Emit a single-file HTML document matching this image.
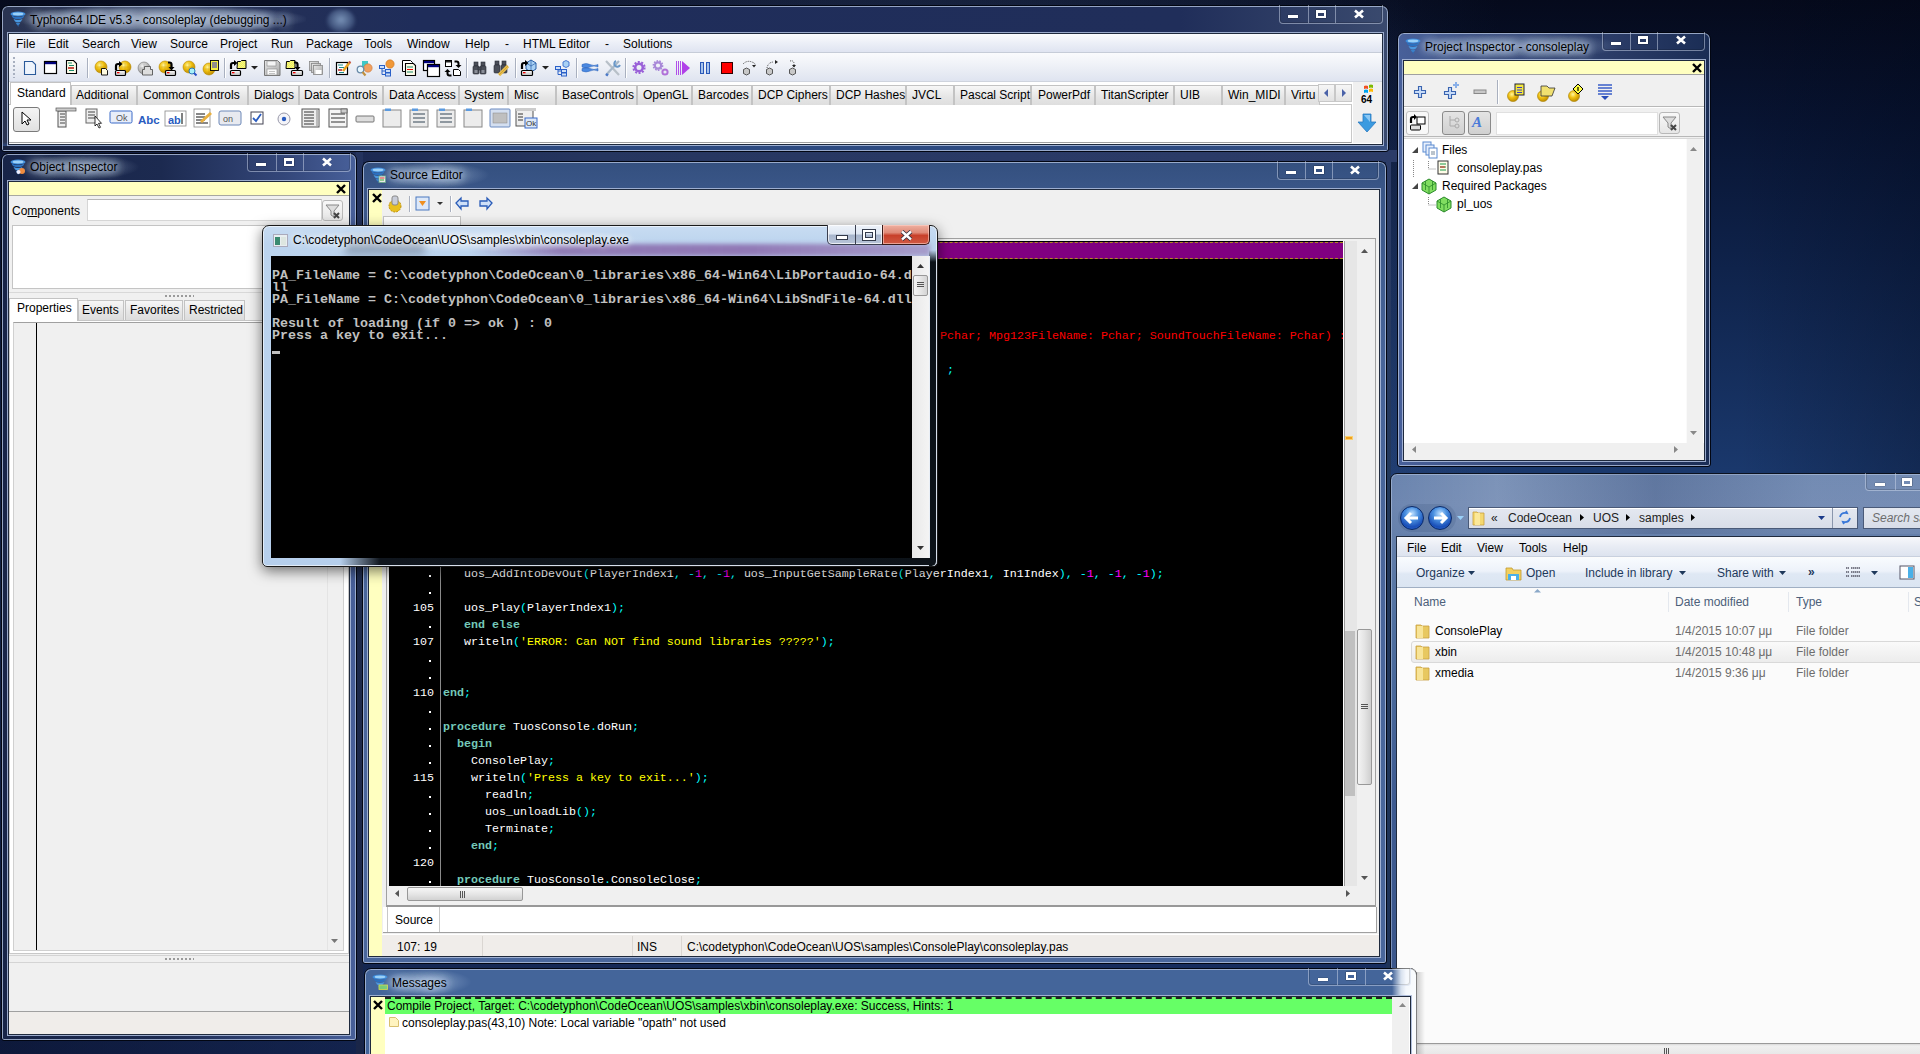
<!DOCTYPE html>
<html><head><meta charset="utf-8">
<style>
*{margin:0;padding:0;box-sizing:border-box}
html,body{width:1920px;height:1054px;overflow:hidden}
body{position:relative;font-family:"Liberation Sans",sans-serif;font-size:12px;color:#000;
background:linear-gradient(90deg,rgba(0,5,20,0) 1740px,rgba(0,5,20,.28) 1920px),radial-gradient(ellipse 650px 520px at 900px 330px,rgba(80,110,170,.5),rgba(80,110,170,0)),linear-gradient(90deg,rgba(8,12,32,.55) 0,rgba(20,30,60,.35) 400px,rgba(40,60,100,.1) 1390px,rgba(0,0,0,0) 1500px),linear-gradient(180deg,#050a1c 0,#081432 120px,#0e2148 250px,#1a386c 470px,#1c3c72 700px,#14285a 1054px);}
.a{position:absolute}
svg{position:absolute;overflow:visible}
.win{position:absolute;border-radius:7px 7px 3px 3px;border:1px solid #020612;
 background:linear-gradient(180deg,#42567a 0px,#2d3f60 30px,#263658 100%);
 box-shadow:inset 0 0 0 1px rgba(170,186,215,.85)}
.cap{position:absolute;margin-top:1px;font-size:12px;color:#000;white-space:nowrap;text-shadow:0 0 8px #d8e6f5,0 0 10px #d8e6f5,0 0 14px #cfe0f2}
.cb{position:absolute;border:1px solid rgba(205,215,235,.5);border-top:none;border-radius:0 0 4px 4px;box-shadow:inset 0 0 0 1px rgba(0,0,0,.15)}
.cb b{position:absolute;top:0;bottom:0;border-left:1px solid rgba(205,215,235,.5)}
.gl{position:absolute;background:#fff;box-shadow:0 0 1px #000}
.client{position:absolute;background:#f0f0f0;border:1px solid #1a2233}
.t{position:absolute;white-space:nowrap}
.mono{font-family:"Liberation Mono",monospace}
.tab{position:absolute;top:85px;height:20px;border:1px solid #c3c3c3;border-bottom:none;background:linear-gradient(180deg,#f7f7f7,#e5e5e5 60%,#dedede)}
</style></head><body>
<!-- MAIN -->
<div class="a" style="left:0;top:150px;width:1397px;height:12px;background:linear-gradient(90deg,#0e1838 0,#1a2750 300px,#26365f 600px,#2a3a66 1000px,#2c3c68 1397px)"></div>
<div class="a" style="left:1386px;top:152px;width:5px;height:902px;background:linear-gradient(180deg,#2c3c68,#22385a 40%,#1e3258)"></div>
<div class="a" style="left:356px;top:152px;width:7px;height:902px;background:linear-gradient(180deg,#24335e,#1e2a4a 50%,#1a2648)"></div>
<div class="win" style="left:1px;top:5px;width:1388px;height:147px;background:linear-gradient(180deg,rgba(0,0,0,0) 0,rgba(0,0,0,0) 136px,#2e4a80 140px),linear-gradient(90deg,#2a3452 0,#1f2d5a 30%,#202e5a 85%,#3a4a6e 100%)"></div>
<div class="a" style="left:16px;top:5px;width:290px;height:28px;border-radius:14px;background:radial-gradient(ellipse at center,rgba(210,225,245,.7),rgba(200,220,245,.35) 50%,rgba(200,220,245,0) 72%)"></div>
<div class="a" style="left:326px;top:9px;width:30px;height:24px;border-radius:14px 14px 4px 4px;background:radial-gradient(ellipse at 50% 45%,rgba(150,180,215,.75),rgba(120,150,190,.35) 55%,rgba(100,130,170,0) 75%);filter:blur(1.5px)"></div>
<svg style="left:10px;top:11px" width="16" height="16"><ellipse cx="8" cy="3" rx="7.5" ry="2.6" fill="#3a88d8"/><ellipse cx="8" cy="3" rx="5.5" ry="1.4" fill="#9ad0f8"/><path d="M1.5 4.5q6.5 3 13 0l-1.5 2.5q-5 2.5-10 0z" fill="#2a70c0"/><path d="M3.5 8q4.5 2 9 0l-1.5 2.5q-3 1.8-6 0z" fill="#4a98e0"/><path d="M5.5 11.5q3 1.2 5 0l-1.2 2q-1.5 1-2.6 0z" fill="#3a80c8"/><path d="M7 14q1 .8 2 0l-.8 1.8z" fill="#2a70c0"/></svg>
<div class="cap" style="left:30px;top:12px;line-height:14px">Typhon64 IDE v5.3 - consoleplay (debugging ...)</div>
<div class="cb" style="left:1279px;top:5px;width:104px;height:19px"><b style="left:28px"></b><b style="left:55px"></b></div>
<div class="gl" style="left:1288px;top:15px;width:10px;height:3px"></div>
<div class="a" style="left:1316px;top:10px;width:10px;height:8px;border:2px solid #fff;border-top-width:3px;box-shadow:0 0 1px #000"></div>
<svg style="left:1354px;top:10px" width="10" height="8"><path d="M1 0.5L9 7.5M9 0.5L1 7.5" stroke="#fff" stroke-width="2.6"/></svg>
<div class="a" style="left:3px;top:146px;width:1384px;height:4px;background:linear-gradient(90deg,#18223e 0,#1e2a50 12%,#2e4a80 30%,#2e4a80 85%,#3a5282 100%)"></div>
<div class="a" style="left:8px;top:33px;width:1375px;height:112px;background:#fff;border:1px solid #1f2a3d;box-shadow:0 0 0 1px rgba(168,184,216,.9)"></div>
<div class="a" style="left:9px;top:34px;width:1373px;height:19px;background:linear-gradient(180deg,#fbfcfe,#eceff7 50%,#dfe4f1);border-bottom:1px solid #c6ccd8"></div>
<div class="t" style="left:16px;top:37px;line-height:14px">File</div>
<div class="t" style="left:48px;top:37px;line-height:14px">Edit</div>
<div class="t" style="left:82px;top:37px;line-height:14px">Search</div>
<div class="t" style="left:131px;top:37px;line-height:14px">View</div>
<div class="t" style="left:170px;top:37px;line-height:14px">Source</div>
<div class="t" style="left:220px;top:37px;line-height:14px">Project</div>
<div class="t" style="left:271px;top:37px;line-height:14px">Run</div>
<div class="t" style="left:306px;top:37px;line-height:14px">Package</div>
<div class="t" style="left:364px;top:37px;line-height:14px">Tools</div>
<div class="t" style="left:407px;top:37px;line-height:14px">Window</div>
<div class="t" style="left:465px;top:37px;line-height:14px">Help</div>
<div class="t" style="left:505px;top:37px;line-height:14px">-</div>
<div class="t" style="left:523px;top:37px;line-height:14px">HTML Editor</div>
<div class="t" style="left:605px;top:37px;line-height:14px">-</div>
<div class="t" style="left:623px;top:37px;line-height:14px">Solutions</div>
<div class="a" style="left:9px;top:53px;width:1373px;height:29px;background:linear-gradient(180deg,#fafbfd,#f1f3f8 35%,#dfe4f0 100%);border-bottom:1px solid #cfd4de"></div>
<div class="a" style="left:13px;top:57px;width:2px;height:21px;background:repeating-linear-gradient(180deg,#a8b0c0 0 2px,transparent 2px 4px)"></div>
<svg style="left:0;top:0" width="1" height="1"><defs><radialGradient id="ggold" cx=".4" cy=".35" r=".7"><stop offset="0" stop-color="#fff6a0"/><stop offset=".45" stop-color="#f0c010"/><stop offset="1" stop-color="#b88600"/></radialGradient><radialGradient id="ggray" cx=".4" cy=".35" r=".7"><stop offset="0" stop-color="#f4f4f4"/><stop offset=".5" stop-color="#c0c0c0"/><stop offset="1" stop-color="#888"/></radialGradient><linearGradient id="gdev" x1="0" y1="0" x2="0" y2="1"><stop offset="0" stop-color="#fff"/><stop offset="1" stop-color="#b8b8b8"/></linearGradient><pattern id="gchk" width="2" height="2" patternUnits="userSpaceOnUse"><rect width="2" height="2" fill="#ffff40"/><rect width="1" height="1" fill="#e8e8a0"/><rect x="1" y="1" width="1" height="1" fill="#e8e8a0"/></pattern><linearGradient id="gdisk" x1="0" y1="0" x2="1" y2="1"><stop offset="0" stop-color="#e8e8e8"/><stop offset="1" stop-color="#a8a8a8"/></linearGradient></defs><path d="M24.5 61.5h8l3 3v10h-11z" fill="#eef4fc" stroke="#2a5a9a" stroke-width="1.1"/><rect x="44.5" y="61.5" width="12" height="12" fill="#fff" stroke="#000" stroke-width="1.2"/><rect x="45" y="62" width="11" height="2.2" fill="#00007a"/><path d="M66.5 60.5h7l3 3v10h-10z" fill="#fdfbe8" stroke="#000" stroke-width="1.1"/><path d="M68 63h4M69 65.5h5M68 68h6M69 70.5h5" stroke="#1a8a6a" stroke-width="1.2"/><path d="M68 68h6" stroke="#e00" stroke-width="1.2"/><circle cx="101" cy="67" r="6" fill="url(#ggold)" stroke="#b88a00" stroke-width=".6"/><path d="M97 67h8M101 63v8" stroke="#b88a00" stroke-width=".5" opacity=".6"/><path d="M101.5 68.5h4l2 2v4.5h-6z" fill="#fffbe0" stroke="#000" stroke-width=".9"/><circle cx="125" cy="67" r="6" fill="url(#ggold)" stroke="#b88a00" stroke-width=".6"/><path d="M121 67h8M125 63v8" stroke="#b88a00" stroke-width=".5" opacity=".6"/><path d="M116 70v-4q0-2 2-2h1.5" stroke="#000" stroke-width="2.2" fill="none"/><path d="M119 61l3.5 3-3.5 3z" fill="#000"/><rect x="115.5" y="70.5" width="10" height="5" rx="1" fill="url(#gdev)" stroke="#000" stroke-width="1.2"/><rect x="117" y="72" width="2.5" height="1.3" fill="#e00"/><circle cx="144" cy="68" r="6" fill="url(#ggray)" stroke="#777" stroke-width=".6"/><path d="M140 68h8M144 64v8" stroke="#777" stroke-width=".5" opacity=".6"/><path d="M144.5 66.5h6v3h2v5.5h-10v-5.5h2z" fill="#ddd" stroke="#555" stroke-width=".9"/><circle cx="165" cy="67" r="6" fill="url(#ggold)" stroke="#b88a00" stroke-width=".6"/><path d="M161 67h8M165 63v8" stroke="#b88a00" stroke-width=".5" opacity=".6"/><path d="M168 62.5h1.5q2 0 2 2v3" stroke="#000" stroke-width="2.2" fill="none"/><path d="M168.5 67h6l-3 3.5z" fill="#000"/><rect x="165.5" y="70.5" width="10" height="5" rx="1" fill="url(#gdev)" stroke="#000" stroke-width="1.2"/><rect x="167" y="72" width="2.5" height="1.3" fill="#e00"/><circle cx="189" cy="67" r="6" fill="url(#ggold)" stroke="#b88a00" stroke-width=".6"/><path d="M185 67h8M189 63v8" stroke="#b88a00" stroke-width=".5" opacity=".6"/><circle cx="192" cy="71" r="3" fill="#a8f0f8" stroke="#2a7ab8" stroke-width="1"/><path d="M194 73l2.5 2.5" stroke="#2a50c8" stroke-width="2"/><circle cx="209" cy="69" r="6" fill="url(#ggold)" stroke="#b88a00" stroke-width=".6"/><path d="M205 69h8M209 65v8" stroke="#b88a00" stroke-width=".5" opacity=".6"/><rect x="210.5" y="60.5" width="8" height="10" fill="#f8f040" stroke="#000" stroke-width=".9"/><path d="M212 63h5M212 65h5M212 67h5" stroke="#2a2ad8" stroke-width="1"/><path d="M231 69v-4q0-2 2-2h1.5" stroke="#000" stroke-width="2.2" fill="none"/><path d="M234 60l3.5 3-3.5 3z" fill="#000"/><path d="M237.5 61.5h3l1-1h4.5v8h-9z" fill="url(#gchk)" stroke="#000" stroke-width="1"/><rect x="230.5" y="70.5" width="10" height="5" rx="1" fill="url(#gdev)" stroke="#000" stroke-width="1.2"/><rect x="232" y="72" width="2.5" height="1.3" fill="#e00"/><path d="M251 66h7l-3.5 3.5z" fill="#222"/><path d="M264.5 60.5h13l2.5 2.5v12.5h-15.5z" fill="url(#gdisk)" stroke="#777" stroke-width="1"/><rect x="267" y="61" width="9" height="5" fill="#f4f4f4" stroke="#888" stroke-width=".6"/><rect x="267" y="69" width="10" height="6" fill="#fafafa" stroke="#888" stroke-width=".6"/><path d="M269 71.5h6M269 73.5h6" stroke="#aaa" stroke-width=".7"/><path d="M286.5 61.5h3l1-1h4.5v8h-9z" fill="url(#gchk)" stroke="#000" stroke-width="1"/><path d="M294 62.5h1.5q2 0 2 2v3" stroke="#000" stroke-width="2.2" fill="none"/><path d="M294.5 67h6l-3 3.5z" fill="#000"/><rect x="291.5" y="70.5" width="11" height="5" rx="1" fill="url(#gdev)" stroke="#000" stroke-width="1.2"/><rect x="293" y="72" width="2.5" height="1.3" fill="#e00"/><g stroke="#888" stroke-width=".8" fill="url(#gdisk)"><rect x="309.5" y="61.5" width="9" height="9"/><rect x="311.5" y="63.5" width="9" height="9"/><rect x="313.5" y="65.5" width="9" height="9"/></g><rect x="315.5" y="70" width="6" height="4" fill="#fff"/><rect x="336.5" y="62.5" width="11" height="12" fill="#fff" stroke="#000" stroke-width="1.2"/><path d="M338 65h5M339 67.5h5M338 70h4M339 72.5h5" stroke="#1a8a8a" stroke-width="1.1"/><path d="M338 70h4" stroke="#e00" stroke-width="1.1"/><path d="M343 71l7-9" stroke="#e8a020" stroke-width="2.6"/><path d="M349 61.5l1.5 1.5" stroke="#c05050" stroke-width="2"/><rect x="362" y="61" width="6" height="6" fill="#40c8c8"/><circle cx="368" cy="68" r="4.2" fill="#f0a060" stroke="#c87030" stroke-width=".5"/><circle cx="360.5" cy="69.5" r="3.3" fill="#e8f8ff" stroke="#6a8aa8" stroke-width="1.3"/><path d="M362.5 72l3 3.5" stroke="#c09040" stroke-width="2.2"/><circle cx="390" cy="64" r="4.2" fill="#f09838" stroke="#c86a10" stroke-width=".5"/><g fill="#cfe0f8" stroke="#2a60c8" stroke-width="1"><rect x="379.5" y="65.5" width="5" height="3"/><rect x="385.5" y="69.5" width="5" height="3"/><rect x="385.5" y="73" width="5" height="3"/></g><path d="M382 68.5v6h3.5M382 71h3.5" stroke="#2a60c8" fill="none"/><path d="M402.5 60.5h8l2 2v9h-10z" fill="#fff" stroke="#000" stroke-width="1"/><path d="M405.5 63.5h8l2 2v10h-10z" fill="#fdfbe8" stroke="#000" stroke-width="1.1"/><path d="M407 67h6M407 69.5h6M407 72h6" stroke="#1a8a6a" stroke-width="1.1"/><path d="M407 69.5h6" stroke="#e00"/><rect x="423.5" y="60.5" width="11" height="10" fill="#fff" stroke="#000" stroke-width="1.2"/><rect x="424" y="61" width="10" height="2.2" fill="#00007a"/><rect x="427.5" y="64.5" width="12" height="12" fill="#fff" stroke="#000" stroke-width="1.2"/><rect x="428" y="65" width="11" height="2.2" fill="#00007a"/><rect x="445.5" y="60.5" width="6" height="6" fill="#fff" stroke="#000"/><rect x="446" y="61" width="5" height="1.5" fill="#222"/><path d="M454.5 61.5h2q2 0 2 2v2" stroke="#000" stroke-width="2" fill="none"/><path d="M455.5 65h6l-3 3z" fill="#000"/><path d="M451.5 75.5h-2q-2 0-2-2v-2" stroke="#000" stroke-width="2" fill="none"/><path d="M444.5 72h6l-3-3z" fill="#000"/><path d="M453.5 69.5h5l2 2v4h-7z" fill="#fff" stroke="#000"/><g fill="#4a4e58" stroke="#2a2e38" stroke-width=".6"><rect x="474" y="62" width="4" height="4"/><rect x="481" y="62" width="4" height="4"/><rect x="473" y="66" width="6" height="8" rx="1"/><rect x="480" y="66" width="6" height="8" rx="1"/><rect x="478" y="67" width="3" height="3"/></g><rect x="474.5" y="70" width="3" height="3" fill="#8a8e98"/><rect x="481.5" y="70" width="3" height="3" fill="#8a8e98"/><g fill="#4a4e58" stroke="#2a2e38" stroke-width=".6"><rect x="495" y="61" width="4" height="4"/><rect x="502" y="61" width="4" height="4"/><rect x="494" y="65" width="6" height="8" rx="1"/><rect x="501" y="65" width="6" height="8" rx="1"/></g><path d="M499 75l9-9" stroke="#e8c050" stroke-width="3.2"/><path d="M499 75l9-9" stroke="#c89020" stroke-width="1" opacity=".6"/><path d="M526 63l5-3 5 3v6l-5 3-5-3z" fill="#a8d0f4" stroke="#2a60a8" stroke-width="1"/><path d="M531 60v12M526 63l5 3 5-3" stroke="#2a60a8" fill="none" stroke-width=".7"/><path d="M522 69v-4q0-2 2-2h1.5" stroke="#000" stroke-width="2.2" fill="none"/><path d="M525 60l3.5 3-3.5 3z" fill="#000"/><rect x="521.5" y="70.5" width="11" height="5" rx="1" fill="url(#gdev)" stroke="#000" stroke-width="1.2"/><rect x="523" y="72" width="2.5" height="1.3" fill="#e00"/><path d="M542 66h7l-3.5 3.5z" fill="#222"/><path d="M563 62l3-1.5 3 1.5v4l-3 1.5-3-1.5z" fill="#a8d0f4" stroke="#2a60c8" stroke-width=".8"/><g fill="#cfe0f8" stroke="#2a60c8" stroke-width="1"><rect x="555.5" y="66.5" width="5" height="3"/><rect x="561.5" y="69.5" width="5" height="3"/><rect x="561.5" y="73" width="5" height="3"/></g><path d="M558 69.5v5h3.5M558 71h3.5" stroke="#2a60c8" fill="none"/><path d="M582 64.5q4-2 8 0t8 0v2.5q-4-2-8 0t-8 0zM582 68.5q4-2 8 0t8 0v2.5q-4-2-8 0t-8 0z" fill="#4a88e0" stroke="#2a60b8" stroke-width=".5"/><path d="M606 61l13 14" stroke="#b8c0c8" stroke-width="2.2"/><path d="M619 61l-13 14" stroke="#a8b8c8" stroke-width="2.2"/><path d="M616 61a3 3 0 1 0 4 4" stroke="#6a98c8" stroke-width="2" fill="none"/><path d="M606 74l2 1.5" stroke="#4a78c8" stroke-width="2.5"/><circle cx="639" cy="67.5" r="5.6" fill="none" stroke="#9a60d8" stroke-width="2" stroke-dasharray="2 1.5"/><circle cx="639" cy="67.5" r="3.8" fill="none" stroke="#9a60d8" stroke-width="2.6"/><circle cx="658" cy="65.5" r="4.6" fill="none" stroke="#a888d8" stroke-width="1.6" stroke-dasharray="1.6 1.2"/><circle cx="658" cy="65.5" r="3.2" fill="none" stroke="#a888d8" stroke-width="2.2"/><circle cx="665" cy="72" r="2.6" fill="none" stroke="#b070d8" stroke-width="2"/><path d="M676.5 61v14M678.5 61v14M680.5 61v14" stroke="#b050e8" stroke-width="1"/><path d="M682 61l8 7-8 7z" fill="#b040e8"/><rect x="700.5" y="62.5" width="3" height="11" fill="#a8c4ec" stroke="#2a58b8"/><rect x="706.5" y="62.5" width="3" height="11" fill="#a8c4ec" stroke="#2a58b8"/><rect x="721.5" y="62.5" width="11" height="11" fill="#f00" stroke="#300" stroke-width="1"/><path d="M743.5 69.5l3-1.5 3 1.5v4l-3 1.5-3-1.5z" fill="#c8c8c8" stroke="#333" stroke-width=".8"/><path d="M766.5 69.5l3-1.5 3 1.5v4l-3 1.5-3-1.5z" fill="#c8c8c8" stroke="#333" stroke-width=".8"/><path d="M789.5 69.5l3-1.5 3 1.5v4l-3 1.5-3-1.5z" fill="#c8c8c8" stroke="#333" stroke-width=".8"/><path d="M743 64q4-4 9-2t2 4" stroke="#444" stroke-width="1" stroke-dasharray="1 1" fill="none"/><path d="M752 65h4l-2 2.5z" fill="#222"/><path d="M767 68q1-6 7-6" stroke="#444" stroke-width="1" stroke-dasharray="1 1" fill="none"/><path d="M775 60l3 2-3 2z" fill="#222"/><path d="M790 61q4-1 4 3v3" stroke="#444" stroke-width="1" stroke-dasharray="1 1" fill="none"/><path d="M792 65h4l-2 2.5z" fill="#222"/></svg>
<div class="a" style="left:87px;top:58px;width:1px;height:20px;background:#a9b0bf;box-shadow:1px 0 0 #fff"></div>
<div class="a" style="left:224px;top:58px;width:1px;height:20px;background:#a9b0bf;box-shadow:1px 0 0 #fff"></div>
<div class="a" style="left:329px;top:58px;width:1px;height:20px;background:#a9b0bf;box-shadow:1px 0 0 #fff"></div>
<div class="a" style="left:466px;top:58px;width:1px;height:20px;background:#a9b0bf;box-shadow:1px 0 0 #fff"></div>
<div class="a" style="left:515px;top:58px;width:1px;height:20px;background:#a9b0bf;box-shadow:1px 0 0 #fff"></div>
<div class="a" style="left:576px;top:58px;width:1px;height:20px;background:#a9b0bf;box-shadow:1px 0 0 #fff"></div>
<div class="a" style="left:625px;top:58px;width:1px;height:20px;background:#a9b0bf;box-shadow:1px 0 0 #fff"></div>
<div class="a" style="left:9px;top:104px;width:1343px;height:39px;background:#fff;border:1px solid #c9c9c9;border-left:none;border-bottom:1px solid #a0a0a0"></div>
<div class="a" style="left:10px;top:82px;width:61px;height:23px;background:#fff;border:1px solid #c3c3c3;border-bottom:none"></div>
<div class="t" style="left:17px;top:86px;line-height:14px">Standard</div>
<div class="tab" style="left:71px;width:66px"></div>
<div class="t" style="left:76px;top:88px;line-height:14px;">Additional</div>
<div class="tab" style="left:137px;width:111px"></div>
<div class="t" style="left:143px;top:88px;line-height:14px;">Common Controls</div>
<div class="tab" style="left:248px;width:51px"></div>
<div class="t" style="left:254px;top:88px;line-height:14px;">Dialogs</div>
<div class="tab" style="left:299px;width:84px"></div>
<div class="t" style="left:304px;top:88px;line-height:14px;">Data Controls</div>
<div class="tab" style="left:383px;width:76px"></div>
<div class="t" style="left:389px;top:88px;line-height:14px;">Data Access</div>
<div class="tab" style="left:459px;width:49px"></div>
<div class="t" style="left:464px;top:88px;line-height:14px;">System</div>
<div class="tab" style="left:508px;width:48px"></div>
<div class="t" style="left:514px;top:88px;line-height:14px;">Misc</div>
<div class="tab" style="left:556px;width:81px"></div>
<div class="t" style="left:562px;top:88px;line-height:14px;">BaseControls</div>
<div class="tab" style="left:637px;width:55px"></div>
<div class="t" style="left:643px;top:88px;line-height:14px;">OpenGL</div>
<div class="tab" style="left:692px;width:60px"></div>
<div class="t" style="left:698px;top:88px;line-height:14px;">Barcodes</div>
<div class="tab" style="left:752px;width:78px"></div>
<div class="t" style="left:758px;top:88px;line-height:14px;">DCP Ciphers</div>
<div class="tab" style="left:830px;width:76px"></div>
<div class="t" style="left:836px;top:88px;line-height:14px;">DCP Hashes</div>
<div class="tab" style="left:906px;width:48px"></div>
<div class="t" style="left:912px;top:88px;line-height:14px;">JVCL</div>
<div class="tab" style="left:954px;width:77px"></div>
<div class="t" style="left:960px;top:88px;line-height:14px;">Pascal Script</div>
<div class="tab" style="left:1031px;width:64px"></div>
<div class="t" style="left:1038px;top:88px;line-height:14px;">PowerPdf</div>
<div class="tab" style="left:1095px;width:79px"></div>
<div class="t" style="left:1101px;top:88px;line-height:14px;">TitanScripter</div>
<div class="tab" style="left:1174px;width:48px"></div>
<div class="t" style="left:1180px;top:88px;line-height:14px;">UIB</div>
<div class="tab" style="left:1222px;width:63px"></div>
<div class="t" style="left:1228px;top:88px;line-height:14px;">Win_MIDI</div>
<div class="tab" style="left:1285px;width:35px"></div>
<div class="t" style="left:1291px;top:88px;line-height:14px;overflow:hidden;width:27px">Virtu</div>
<div class="a" style="left:1318px;top:84px;width:17px;height:18px;border:1px solid #c8c8c8;background:linear-gradient(#f6f6f6,#e2e2e2)"></div>
<div class="a" style="left:1335px;top:84px;width:17px;height:18px;border:1px solid #c8c8c8;background:linear-gradient(#f6f6f6,#e2e2e2)"></div>
<svg style="left:1324px;top:89px" width="6" height="8"><path d="M4 0L0 4L4 8z" fill="#4a62a8"/></svg>
<svg style="left:1342px;top:89px" width="6" height="8"><path d="M0 0L4 4L0 8z" fill="#4a62a8"/></svg>
<div class="a" style="left:1353px;top:82px;width:29px;height:61px;background:#f0f0f0"></div>
<svg style="left:1363px;top:84px" width="12" height="10"><path d="M1 2q2-1 4 0v3q-2-1-4 0z" fill="#f25022"/><path d="M6 1q2-1 4 0v3q-2-1-4 0z" fill="#7fba00"/><path d="M1 6q2-1 4 0v3q-2-1-4 0z" fill="#00a4ef"/><path d="M6 5q2-1 4 0v3q-2-1-4 0z" fill="#ffb900"/></svg>
<div class="t" style="left:1361px;top:94px;font-size:10px;font-weight:bold;line-height:11px">64</div>
<svg style="left:1357px;top:113px" width="20" height="20"><path d="M6 1h8v8h5l-9 10l-9-10h5z" fill="#3c9be0" stroke="#2a78c0" stroke-width=".8"/><path d="M7 2h6v7" fill="#8cc8f4"/></svg>
<div class="a" style="left:13px;top:107px;width:27px;height:25px;border:1px solid #7a7a7a;border-radius:3px;background:linear-gradient(#f4f4f4,#e0e0e0)"></div>
<svg style="left:21px;top:112px" width="12" height="14"><path d="M1 0v12l3-3 2 4 2-1-2-4h4z" fill="#fff" stroke="#000"/></svg>
<svg style="left:0;top:0" width="1" height="1"><rect x="58" y="111" width="8" height="16" fill="#eee" stroke="#555"/><rect x="56" y="108" width="20" height="3" fill="#ccc" stroke="#555" stroke-width=".7"/><path d="M60 114h5M60 117h5M60 120h5M60 123h5" stroke="#444"/><rect x="86" y="109" width="11" height="14" fill="#eee" stroke="#666"/><path d="M88 112h7M88 115h7M88 118h7" stroke="#444"/><path d="M95 116v10l2-2 2 4 1.5-.7-2-4h3z" fill="#fff" stroke="#000" stroke-width=".8"/><rect x="110" y="111" width="22" height="12" rx="1.5" fill="#e8eefa" stroke="#3a6ac8"/><text x="116" y="121" font-size="9" fill="#555" font-family="Liberation Sans">Ok</text><text x="138" y="124" font-size="11.5" font-weight="bold" fill="#2a5cc0" font-family="Liberation Sans">Abc</text><rect x="165" y="111" width="21" height="15" fill="#fff" stroke="#888" stroke-width=".8"/><text x="168" y="124" font-size="11" font-weight="bold" fill="#2a5cc0" font-family="Liberation Sans">ab</text><path d="M182 113v11" stroke="#000"/><rect x="194" y="109" width="16" height="18" fill="#fff" stroke="#888" stroke-width=".8"/><path d="M196 114h9M196 117h9M196 120h9M196 123h12" stroke="#111" stroke-width="1.2"/><path d="M201 122l10-9" stroke="#e8b040" stroke-width="3"/><rect x="219" y="111" width="22" height="14" rx="2" fill="#e8eaf0" stroke="#6d88b8"/><text x="223" y="122" font-size="9" fill="#555" font-family="Liberation Sans">on</text><rect x="251" y="112" width="12" height="12" fill="#fff" stroke="#445"/><path d="M253 118l3 3 5-7" stroke="#2a5cc0" stroke-width="1.8" fill="none"/><circle cx="284" cy="119" r="6" fill="#f4f4f8" stroke="#99a"/><circle cx="284" cy="119" r="2.2" fill="#2a5cc0"/><rect x="302" y="109" width="17" height="18" fill="#eee" stroke="#555"/><path d="M304 112h10M304 115h10M304 118h10M304 121h10M304 124h10" stroke="#333"/><rect x="316" y="110" width="2.5" height="16" fill="#bbb"/><rect x="329" y="109" width="18" height="18" fill="#f4f4f4" stroke="#555"/><path d="M331 114h14M331 118h14M331 122h14" stroke="#333"/><rect x="341" y="109" width="6" height="4" fill="#ccc" stroke="#555" stroke-width=".7"/><rect x="356" y="116" width="18" height="6" rx="1" fill="#ddd" stroke="#777"/><rect x="383" y="110" width="18" height="17" fill="#ececec" stroke="#888"/><rect x="385" y="108.5" width="6" height="2.5" fill="#5a9ae0"/><rect x="410" y="110" width="18" height="17" fill="#ececec" stroke="#888"/><rect x="412" y="108.5" width="6" height="2.5" fill="#5a9ae0"/><rect x="437" y="110" width="18" height="17" fill="#ececec" stroke="#888"/><rect x="439" y="108.5" width="6" height="2.5" fill="#5a9ae0"/><rect x="464" y="110" width="18" height="17" fill="#ececec" stroke="#888"/><rect x="466" y="108.5" width="6" height="2.5" fill="#5a9ae0"/><path d="M413 114h12M413 118h12M413 122h12" stroke="#345"/><path d="M440 114h12M440 118h12M440 122h12" stroke="#345"/><rect x="490" y="109" width="20" height="18" rx="1" fill="#d4dff0" stroke="#6a8ac0"/><rect x="493" y="113" width="14" height="10" fill="#bfbfbf" stroke="#888" stroke-width=".5"/><rect x="516" y="109" width="17" height="17" fill="#eee" stroke="#555"/><rect x="516" y="108" width="20" height="3" fill="#ccc"/><path d="M518 114h5M518 117h5M518 120h5" stroke="#333"/><rect x="525" y="118" width="12" height="10" fill="#dce8f8" stroke="#3a6ac8"/><text x="526" y="126" font-size="8" fill="#333" font-family="Liberation Sans">Ok</text></svg>
<!-- OI -->
<div class="win" style="left:1px;top:153px;width:356px;height:888px;background:linear-gradient(90deg,#172448 0,#1c2a50 45%,#34477a 80%,#48609a 100%)"></div>
<div class="a" style="left:20px;top:154px;width:120px;height:26px;border-radius:13px;background:radial-gradient(ellipse at center,rgba(200,220,245,.5),rgba(200,220,245,0) 70%)"></div>
<svg style="left:10px;top:159px" width="16" height="16"><ellipse cx="8" cy="3" rx="7.5" ry="2.6" fill="#3a88d8"/><ellipse cx="8" cy="3" rx="5.5" ry="1.4" fill="#9ad0f8"/><path d="M1.5 4.5q6.5 3 13 0l-1.5 2.5q-5 2.5-10 0z" fill="#2a70c0"/><path d="M3.5 8q4.5 2 9 0l-1.5 2.5q-3 1.8-6 0z" fill="#4a98e0"/><path d="M5.5 11.5q3 1.2 5 0l-1.2 2q-1.5 1-2.6 0z" fill="#3a80c8"/><path d="M7 14q1 .8 2 0l-.8 1.8z" fill="#2a70c0"/><circle cx="12" cy="12" r="3" fill="#f08a3a"/><circle cx="8.5" cy="13" r="2" fill="#eef"/></svg>
<div class="cap" style="left:30px;top:159px;line-height:14px">Object Inspector</div>
<div class="cb" style="left:247px;top:153px;width:104px;height:19px"><b style="left:28px"></b><b style="left:55px"></b></div>
<div class="gl" style="left:256px;top:163px;width:10px;height:3px"></div>
<div class="a" style="left:284px;top:158px;width:10px;height:8px;border:2px solid #fff;border-top-width:3px;box-shadow:0 0 1px #000"></div>
<svg style="left:322px;top:158px" width="10" height="8"><path d="M1 0.5L9 7.5M9 0.5L1 7.5" stroke="#fff" stroke-width="2.6"/></svg>
<div class="a" style="left:8px;top:181px;width:342px;height:854px;background:#f0f0f0;border:1px solid #1f2a3d;box-shadow:0 0 0 1px rgba(168,184,216,.9)"></div>
<div class="a" style="left:9px;top:182px;width:340px;height:14px;background:#ffffc0;border-bottom:1px solid #a8a8a0"></div>
<svg style="left:336px;top:184px" width="10" height="10"><path d="M1 1L9 9M9 1L1 9" stroke="#000" stroke-width="2.4"/></svg>
<div class="t" style="left:12px;top:204px;line-height:14px">Co<u>m</u>ponents</div>
<div class="a" style="left:87px;top:199px;width:235px;height:22px;background:#fff;border:1px solid #d6d6d6;border-top-color:#b6b6b6"></div>
<div class="a" style="left:322px;top:200px;width:21px;height:21px;border:1px solid #b8b8b8;border-radius:3px;background:linear-gradient(#f8f8f8,#e6e6e6)"></div>
<svg style="left:325px;top:204px" width="16" height="15"><path d="M1 1h13l-5 6v6l-3-2V7z" fill="#ddd" stroke="#888"/><path d="M9 9l5 5M14 9l-5 5" stroke="#444" stroke-width="2"/></svg>
<div class="a" style="left:12px;top:225px;width:334px;height:64px;background:#fff;border:1px solid #c4c4c4"></div>
<div class="a" style="left:9px;top:292px;width:340px;height:1px;background:#d8d8d8"></div>
<div class="a" style="left:165px;top:295px;width:29px;height:2px;background:repeating-linear-gradient(90deg,#9a9a9a 0 2px,transparent 2px 4px)"></div>
<div class="a" style="left:9px;top:320px;width:340px;height:1px;background:#c6c6c6"></div>
<div class="a" style="left:9px;top:298px;width:69px;height:23px;background:#fff;border:1px solid #c3c3c3;border-bottom:none"></div>
<div class="t" style="left:17px;top:301px;line-height:14px">Properties</div>
<div class="a" style="left:78px;top:300px;width:46px;height:20px;border:1px solid #c3c3c3;border-bottom:none;background:linear-gradient(180deg,#f7f7f7,#e5e5e5 60%,#dcdcdc)"></div>
<div class="t" style="left:82px;top:303px;line-height:14px">Events</div>
<div class="a" style="left:125px;top:300px;width:58px;height:20px;border:1px solid #c3c3c3;border-bottom:none;background:linear-gradient(180deg,#f7f7f7,#e5e5e5 60%,#dcdcdc)"></div>
<div class="t" style="left:130px;top:303px;line-height:14px">Favorites</div>
<div class="a" style="left:184px;top:300px;width:61px;height:20px;border:1px solid #c3c3c3;border-bottom:none;background:linear-gradient(180deg,#f7f7f7,#e5e5e5 60%,#dcdcdc)"></div>
<div class="t" style="left:189px;top:303px;line-height:14px">Restricted</div>
<div class="a" style="left:9px;top:321px;width:340px;height:633px;background:#fff;border-left:1px solid #c8c8c8;border-right:1px solid #c8c8c8;border-bottom:1px solid #c8c8c8"></div>
<div class="a" style="left:13px;top:322px;width:331px;height:629px;background:#f0f0f0;border:1px solid #d0d0d0;border-top-color:#a0a0a0"></div>
<div class="a" style="left:36px;top:323px;width:1px;height:627px;background:#000"></div>
<div class="a" style="left:327px;top:323px;width:16px;height:627px;background:#f0f0f0;border-left:1px solid #e4e4e4"></div>
<svg style="left:331px;top:939px" width="8" height="5"><path d="M0 0h7l-3.5 4z" fill="#777"/></svg>
<div class="a" style="left:9px;top:955px;width:340px;height:1px;background:#d4d4d4"></div>
<div class="a" style="left:165px;top:958px;width:29px;height:2px;background:repeating-linear-gradient(90deg,#9a9a9a 0 2px,transparent 2px 4px)"></div>
<div class="a" style="left:9px;top:962px;width:340px;height:1px;background:#d4d4d4"></div>
<div class="a" style="left:9px;top:1011px;width:340px;height:1px;background:#a0a0a0"></div>
<div class="a" style="left:9px;top:1012px;width:340px;height:22px;background:#f0edea"></div>
<!-- SOURCE EDITOR -->
<div class="win" style="left:362px;top:161px;width:1025px;height:803px;background:linear-gradient(180deg,#34507f 0,#3a5688 28px,#48659a 200px,#4a679c 100%)"></div>
<div class="a" style="left:380px;top:162px;width:110px;height:26px;border-radius:13px;background:radial-gradient(ellipse at center,rgba(200,220,245,.5),rgba(200,220,245,0) 70%)"></div>
<svg style="left:370px;top:167px" width="16" height="16"><ellipse cx="8" cy="3" rx="7.5" ry="2.6" fill="#3a88d8"/><ellipse cx="8" cy="3" rx="5.5" ry="1.4" fill="#9ad0f8"/><path d="M1.5 4.5q6.5 3 13 0l-1.5 2.5q-5 2.5-10 0z" fill="#2a70c0"/><path d="M3.5 8q4.5 2 9 0l-1.5 2.5q-3 1.8-6 0z" fill="#4a98e0"/><path d="M5.5 11.5q3 1.2 5 0l-1.2 2q-1.5 1-2.6 0z" fill="#3a80c8"/><path d="M7 14q1 .8 2 0l-.8 1.8z" fill="#2a70c0"/><rect x="9" y="9" width="6.5" height="6.5" fill="#e8e8e8" stroke="#6a8" stroke-width=".8"/><path d="M10 11h4.5" stroke="#d33"/><path d="M10 13h4" stroke="#3a3"/></svg>
<div class="cap" style="left:390px;top:167px;line-height:14px">Source Editor</div>
<div class="cb" style="left:1277px;top:161px;width:102px;height:19px"><b style="left:27px"></b><b style="left:54px"></b></div>
<div class="gl" style="left:1286px;top:171px;width:10px;height:3px"></div>
<div class="a" style="left:1314px;top:166px;width:10px;height:8px;border:2px solid #fff;border-top-width:3px;box-shadow:0 0 1px #000"></div>
<svg style="left:1350px;top:166px" width="10" height="8"><path d="M1 0.5L9 7.5M9 0.5L1 7.5" stroke="#fff" stroke-width="2.6"/></svg>
<div class="a" style="left:368px;top:189px;width:1012px;height:768px;background:#f0f0f0;border:1px solid #1f2a3d;box-shadow:0 0 0 1px rgba(168,184,216,.9)"></div>
<div class="a" style="left:369px;top:190px;width:13px;height:766px;background:#ffffc0"></div>
<svg style="left:372px;top:193px" width="10" height="10"><path d="M1 1L9 9M9 1L1 9" stroke="#000" stroke-width="2.4"/></svg>
<svg style="left:0;top:0" width="1" height="1"><circle cx="395" cy="206" r="6" fill="#e8c020" stroke="#c09000" stroke-dasharray="2 1"/><rect x="392" y="196" width="6" height="9" rx="2" fill="#c8ccd8" stroke="#888"/><rect x="416" y="197" width="13" height="13" fill="#dde8f8" stroke="#4a78c0"/><path d="M419 201h7l-3.5 5z" fill="#f09020"/><path d="M437 202h6l-3 3z" fill="#333"/><path d="M456 203l5-5v3h7v5h-7v3z" fill="#cfe0f8" stroke="#2a5cb8" stroke-width="1.3"/><path d="M492 203l-5-5v3h-7v5h7v3z" fill="#cfe0f8" stroke="#2a5cb8" stroke-width="1.3"/></svg>
<div class="a" style="left:409px;top:196px;width:1px;height:16px;background:#a9b0bf;box-shadow:1px 0 0 #fff"></div>
<div class="a" style="left:450px;top:196px;width:1px;height:16px;background:#a9b0bf;box-shadow:1px 0 0 #fff"></div>
<div class="a" style="left:383px;top:216px;width:78px;height:23px;background:#fff;border:1px solid #c3c3c3;border-bottom:none"></div>
<div class="a" style="left:386px;top:238px;width:990px;height:669px;background:#f0f0f0;border:1px solid #a0a0a0;border-bottom:2px solid #989898"></div>
<div class="a" style="left:389px;top:241px;width:954px;height:645px;background:#000"></div>
<div class="a" style="left:389px;top:242px;width:954px;height:17px;background:#800080;border-top:1px dashed #b08a20;border-bottom:1px dashed #b08a20"></div>
<div class="a" style="left:440px;top:259px;width:1px;height:627px;background:#8a8a8a"></div>
<div class="a" style="left:1343px;top:241px;width:14px;height:645px;background:#e6e6e6;border-left:1px solid #fff;box-shadow:inset 1px 0 0 #999"></div>
<div class="a" style="left:1345px;top:631px;width:10px;height:165px;background:#c0c0c0"></div>
<div class="a" style="left:1345px;top:436px;width:8px;height:4px;background:#f0a020;border:1px solid #f8d070"></div>
<div class="a" style="left:1357px;top:241px;width:17px;height:645px;background:#f0f0f0"></div>
<svg style="left:1361px;top:249px" width="8" height="5"><path d="M0 4h7L3.5 0z" fill="#555"/></svg>
<svg style="left:1361px;top:876px" width="8" height="5"><path d="M0 0h7l-3.5 4z" fill="#555"/></svg>
<div class="a" style="left:1357px;top:629px;width:15px;height:156px;border:1px solid #989898;border-radius:2px;background:linear-gradient(90deg,#f4f4f4,#e4e4e4 50%,#cfcfcf)"></div>
<div class="a" style="left:1361px;top:704px;width:7px;height:5px;background:repeating-linear-gradient(180deg,#555 0 1px,transparent 1px 2px)"></div>
<div class="a" style="left:389px;top:886px;width:985px;height:19px;background:#f0f0f0"></div>
<svg style="left:395px;top:890px" width="5" height="8"><path d="M4 0v7L0 3.5z" fill="#555"/></svg>
<svg style="left:1346px;top:890px" width="5" height="8"><path d="M0 0v7l4-3.5z" fill="#555"/></svg>
<div class="a" style="left:407px;top:887px;width:116px;height:14px;border:1px solid #989898;border-radius:2px;background:linear-gradient(180deg,#f6f6f6,#e6e6e6 50%,#d2d2d2)"></div>
<div class="a" style="left:460px;top:891px;width:5px;height:7px;background:repeating-linear-gradient(90deg,#555 0 1px,transparent 1px 2px)"></div>
<div class="a" style="left:383px;top:907px;width:994px;height:26px;background:#fff;border-bottom:1px solid #a0a0a0;border-right:1px solid #a0a0a0"></div>
<div class="a" style="left:387px;top:907px;width:53px;height:25px;background:#fff;border-left:1px solid #c8c8c8;border-right:1px solid #c8c8c8"></div>
<div class="t" style="left:395px;top:913px;line-height:14px">Source</div>
<div class="a" style="left:382px;top:934px;width:997px;height:22px;background:#f0edea;border-top:1px solid #fff"></div>
<div class="a" style="left:482px;top:936px;width:1px;height:20px;background:#dad6d2"></div>
<div class="a" style="left:632px;top:936px;width:1px;height:20px;background:#dad6d2"></div>
<div class="a" style="left:681px;top:936px;width:1px;height:20px;background:#dad6d2"></div>
<div class="t" style="left:397px;top:940px;line-height:14px">107: 19</div>
<div class="t" style="left:637px;top:940px;line-height:14px">INS</div>
<div class="t" style="left:687px;top:940px;line-height:14px">C:\codetyphon\CodeOcean\UOS\samples\ConsolePlay\consoleplay.pas</div>
<div class="a" style="left:429px;top:575px;width:2px;height:2px;background:#fff"></div>
<div class="a" style="left:429px;top:592px;width:2px;height:2px;background:#fff"></div>
<div class="t mono" style="left:413px;top:600px;line-height:17px;font-size:11.667px;color:#fff">105</div>
<div class="a" style="left:429px;top:626px;width:2px;height:2px;background:#fff"></div>
<div class="t mono" style="left:413px;top:634px;line-height:17px;font-size:11.667px;color:#fff">107</div>
<div class="a" style="left:429px;top:660px;width:2px;height:2px;background:#fff"></div>
<div class="a" style="left:429px;top:677px;width:2px;height:2px;background:#fff"></div>
<div class="t mono" style="left:413px;top:685px;line-height:17px;font-size:11.667px;color:#fff">110</div>
<div class="a" style="left:429px;top:711px;width:2px;height:2px;background:#fff"></div>
<div class="a" style="left:429px;top:728px;width:2px;height:2px;background:#fff"></div>
<div class="a" style="left:429px;top:745px;width:2px;height:2px;background:#fff"></div>
<div class="a" style="left:429px;top:762px;width:2px;height:2px;background:#fff"></div>
<div class="t mono" style="left:413px;top:770px;line-height:17px;font-size:11.667px;color:#fff">115</div>
<div class="a" style="left:429px;top:796px;width:2px;height:2px;background:#fff"></div>
<div class="a" style="left:429px;top:813px;width:2px;height:2px;background:#fff"></div>
<div class="a" style="left:429px;top:830px;width:2px;height:2px;background:#fff"></div>
<div class="a" style="left:429px;top:847px;width:2px;height:2px;background:#fff"></div>
<div class="t mono" style="left:413px;top:855px;line-height:17px;font-size:11.667px;color:#fff">120</div>
<div class="a" style="left:429px;top:881px;width:2px;height:2px;background:#fff"></div>
<div class="t mono" style="left:940px;top:328px;line-height:17px;font-size:11.667px"><span style="color:#ff0000">Pchar; Mpg123FileName: Pchar; SoundTouchFileName: Pchar) :</span></div>
<div class="t mono" style="left:947px;top:362px;line-height:17px;font-size:11.667px"><span style="color:#00ffff">;</span></div>
<div class="t mono" style="left:464px;top:566px;line-height:17px;font-size:11.667px"><span style="color:#ffffff">uos_AddIntoDevOut</span><span style="color:#00ffff">(</span><span style="color:#ffffff">PlayerIndex1</span><span style="color:#00ffff">, </span><span style="color:#00ffff">-</span><span style="color:#ff00ff">1</span><span style="color:#00ffff">, </span><span style="color:#00ffff">-</span><span style="color:#ff00ff">1</span><span style="color:#00ffff">, </span><span style="color:#ffffff">uos_InputGetSampleRate</span><span style="color:#00ffff">(</span><span style="color:#ffffff">PlayerIndex1</span><span style="color:#00ffff">, </span><span style="color:#ffffff">In1Index</span><span style="color:#00ffff">), </span><span style="color:#00ffff">-</span><span style="color:#ff00ff">1</span><span style="color:#00ffff">, </span><span style="color:#00ffff">-</span><span style="color:#ff00ff">1</span><span style="color:#00ffff">, </span><span style="color:#00ffff">-</span><span style="color:#ff00ff">1</span><span style="color:#00ffff">);</span></div>
<div class="t mono" style="left:464px;top:600px;line-height:17px;font-size:11.667px"><span style="color:#ffffff">uos_Play</span><span style="color:#00ffff">(</span><span style="color:#ffffff">PlayerIndex1</span><span style="color:#00ffff">);</span></div>
<div class="t mono" style="left:464px;top:617px;line-height:17px;font-size:11.667px"><span style="color:#74c9b8;font-weight:bold">end else</span></div>
<div class="t mono" style="left:464px;top:634px;line-height:17px;font-size:11.667px"><span style="color:#ffffff">writeln</span><span style="color:#00ffff">(</span><span style="color:#ffff00">'ERROR: Can NOT find sound libraries ?????'</span><span style="color:#00ffff">);</span></div>
<div class="t mono" style="left:443px;top:685px;line-height:17px;font-size:11.667px"><span style="color:#74c9b8;font-weight:bold">end</span><span style="color:#00ffff">;</span></div>
<div class="t mono" style="left:443px;top:719px;line-height:17px;font-size:11.667px"><span style="color:#74c9b8;font-weight:bold">procedure</span><span style="color:#ffffff"> TuosConsole</span><span style="color:#00ffff">.</span><span style="color:#ffffff">doRun</span><span style="color:#00ffff">;</span></div>
<div class="t mono" style="left:457px;top:736px;line-height:17px;font-size:11.667px"><span style="color:#74c9b8;font-weight:bold">begin</span></div>
<div class="t mono" style="left:471px;top:753px;line-height:17px;font-size:11.667px"><span style="color:#ffffff">ConsolePlay</span><span style="color:#00ffff">;</span></div>
<div class="t mono" style="left:471px;top:770px;line-height:17px;font-size:11.667px"><span style="color:#ffffff">writeln</span><span style="color:#00ffff">(</span><span style="color:#ffff00">'Press a key to exit...'</span><span style="color:#00ffff">);</span></div>
<div class="t mono" style="left:485px;top:787px;line-height:17px;font-size:11.667px"><span style="color:#ffffff">readln</span><span style="color:#00ffff">;</span></div>
<div class="t mono" style="left:485px;top:804px;line-height:17px;font-size:11.667px"><span style="color:#ffffff">uos_unloadLib</span><span style="color:#00ffff">();</span></div>
<div class="t mono" style="left:485px;top:821px;line-height:17px;font-size:11.667px"><span style="color:#ffffff">Terminate</span><span style="color:#00ffff">;</span></div>
<div class="t mono" style="left:471px;top:838px;line-height:17px;font-size:11.667px"><span style="color:#74c9b8;font-weight:bold">end</span><span style="color:#00ffff">;</span></div>
<div class="a" style="left:389px;top:871px;width:954px;height:15px;overflow:hidden"><div class="t mono" style="left:68px;top:1px;line-height:17px;font-size:11.667px"><span style="color:#74c9b8;font-weight:bold">procedure</span><span style="color:#ffffff"> TuosConsole</span><span style="color:#00ffff">.</span><span style="color:#ffffff">ConsoleClose</span><span style="color:#00ffff">;</span></div>
<div class="a" style="left:40px;top:10px;width:2px;height:2px;background:#fff"></div><div class="a" style="left:51px;top:0;width:1px;height:15px;background:#8a8a8a"></div></div>
<!-- PROJECT INSPECTOR -->
<div class="win" style="left:1397px;top:32px;width:314px;height:435px;background:linear-gradient(90deg,#48609a 0,#3a4e80 30%,#2a3b66 70%,#1a2d55 100%)"></div>
<div class="a" style="left:1415px;top:33px;width:210px;height:26px;border-radius:13px;background:radial-gradient(ellipse at center,rgba(200,220,245,.45),rgba(200,220,245,0) 70%)"></div>
<svg style="left:1405px;top:38px" width="16" height="16"><ellipse cx="8" cy="3" rx="7.5" ry="2.6" fill="#3a88d8"/><ellipse cx="8" cy="3" rx="5.5" ry="1.4" fill="#9ad0f8"/><path d="M1.5 4.5q6.5 3 13 0l-1.5 2.5q-5 2.5-10 0z" fill="#2a70c0"/><path d="M3.5 8q4.5 2 9 0l-1.5 2.5q-3 1.8-6 0z" fill="#4a98e0"/><path d="M5.5 11.5q3 1.2 5 0l-1.2 2q-1.5 1-2.6 0z" fill="#3a80c8"/><path d="M7 14q1 .8 2 0l-.8 1.8z" fill="#2a70c0"/></svg>
<div class="cap" style="left:1425px;top:39px;line-height:14px">Project Inspector - consoleplay</div>
<div class="cb" style="left:1602px;top:32px;width:103px;height:19px"><b style="left:27px"></b><b style="left:54px"></b></div>
<div class="gl" style="left:1611px;top:42px;width:10px;height:3px"></div>
<div class="a" style="left:1638px;top:36px;width:10px;height:8px;border:2px solid #fff;border-top-width:3px;box-shadow:0 0 1px #000"></div>
<svg style="left:1676px;top:36px" width="10" height="8"><path d="M1 0.5L9 7.5M9 0.5L1 7.5" stroke="#fff" stroke-width="2.6"/></svg>
<div class="a" style="left:1403px;top:60px;width:302px;height:401px;background:#f0f0f0;border:1px solid #1f2a3d;box-shadow:0 0 0 1px rgba(168,184,216,.9)"></div>
<div class="a" style="left:1404px;top:61px;width:300px;height:14px;background:#ffffc0;border-bottom:1px solid #a0a0a0"></div>
<svg style="left:1692px;top:63px" width="10" height="10"><path d="M1 1L9 9M9 1L1 9" stroke="#000" stroke-width="2.4"/></svg>
<div class="a" style="left:1404px;top:106px;width:300px;height:1px;background:#b8b8b8;box-shadow:0 1px 0 #fff"></div>
<svg style="left:0;top:0" width="1" height="1"><path d="M1418.5 86.5h3v4h4v3h-4v4h-3v-4h-4v-3h4z" fill="#c8dcf8" stroke="#3a64b0" stroke-width="1.1"/><path d="M1448.5 87.5h3v4h4v3h-4v4h-3v-4h-4v-3h4z" fill="#c8dcf8" stroke="#3a64b0" stroke-width="1.1"/><path d="M1455 82h2v2h2v2h-2v2h-2v-2h-2v-2h2z" fill="#8ab0e8"/><rect x="1474" y="90" width="12" height="3.5" fill="#c8c8c8" stroke="#888"/><circle cx="1513" cy="96" r="5.5" fill="url(#ggold)" stroke="#a88000" stroke-width=".6"/><rect x="1515" y="84" width="9" height="11" fill="#f4e840" stroke="#223"/><path d="M1517 87.5h5M1517 90h5M1517 92.5h5" stroke="#2a2ad8" stroke-width=".9"/><circle cx="1543" cy="96" r="5.5" fill="url(#ggold)" stroke="#a88000" stroke-width=".6"/><path d="M1541 86h6l2 2h6l-3 8h-11z" fill="#f0e070" stroke="#333" stroke-width=".8"/><circle cx="1574" cy="96" r="5.5" fill="url(#ggold)" stroke="#a88000" stroke-width=".6"/><path d="M1578 84l5 5-5 5-5-5z" fill="#ffff40" stroke="#000"/><path d="M1578 87v4" stroke="#000" stroke-width="1.2"/><path d="M1598 85h14M1598 88h14M1598 91h14M1598 94h14" stroke="#3a5ec8" stroke-width="1.6"/><path d="M1601 96h8l-4 4z" fill="#2a4eb8"/></svg>
<div class="a" style="left:1497px;top:80px;width:1px;height:24px;background:#a9b0bf;box-shadow:1px 0 0 #fff"></div>
<div class="a" style="left:1404px;top:136px;width:300px;height:1px;background:#b8b8b8;box-shadow:0 2px 0 #d8d8d8"></div>
<div class="a" style="left:1406px;top:111px;width:23px;height:24px;border:1px solid #c0c0c0;border-radius:3px;background:#f8f8f8"></div>
<svg style="left:1409px;top:114px" width="18" height="18"><path d="M2 9V5q0-2 2-2h2" stroke="#000" stroke-width="2.2" fill="none"/><path d="M5 0l3 3-3 3z" fill="#000"/><rect x="8" y="3" width="8" height="7" fill="#fff" stroke="#000"/><rect x="1.5" y="11" width="10" height="5" rx="1" fill="#ddd" stroke="#000"/></svg>
<div class="a" style="left:1442px;top:111px;width:23px;height:24px;border:1px solid #8a8a8a;border-radius:3px;background:linear-gradient(#e4e4e4,#d0d0d0)"></div>
<svg style="left:1447px;top:115px" width="14" height="16"><path d="M3 1v10h5M3 5h5" stroke="#aaa" fill="none"/><circle cx="10" cy="5" r="2" fill="none" stroke="#aaa"/><circle cx="10" cy="11" r="2" fill="none" stroke="#aaa"/></svg>
<div class="a" style="left:1468px;top:111px;width:23px;height:24px;border:1px solid #8a8a8a;border-radius:3px;background:linear-gradient(#e4e4e4,#d0d0d0)"></div>
<div class="t" style="left:1472px;top:114px;font-size:15px;font-weight:bold;font-style:italic;color:#4a7ad8;line-height:16px;font-family:'Liberation Serif',serif">A</div>
<div class="a" style="left:1496px;top:112px;width:162px;height:23px;background:#fff;border:1px solid #e0e0e0"></div>
<div class="a" style="left:1659px;top:112px;width:21px;height:22px;border:1px solid #b8b8b8;border-radius:3px;background:linear-gradient(#f8f8f8,#e6e6e6)"></div>
<svg style="left:1662px;top:116px" width="16" height="15"><path d="M1 1h13l-5 6v6l-3-2V7z" fill="#ddd" stroke="#888"/><path d="M9 9l5 5M14 9l-5 5" stroke="#444" stroke-width="2"/></svg>
<div class="a" style="left:1404px;top:139px;width:300px;height:321px;background:#fff"></div>
<div class="a" style="left:1686px;top:139px;width:17px;height:304px;background:#f0f0f0;border-left:1px solid #fafafa"></div>
<svg style="left:1690px;top:147px" width="8" height="5"><path d="M0 4h7L3.5 0z" fill="#888"/></svg>
<svg style="left:1690px;top:431px" width="8" height="5"><path d="M0 0h7l-3.5 4z" fill="#888"/></svg>
<div class="a" style="left:1404px;top:443px;width:300px;height:17px;background:#f0f0f0"></div>
<svg style="left:1412px;top:446px" width="5" height="8"><path d="M4 0v7L0 3.5z" fill="#888"/></svg>
<svg style="left:1674px;top:446px" width="5" height="8"><path d="M0 0v7l4-3.5z" fill="#888"/></svg>
<svg style="left:0;top:0" width="1" height="1"><path d="M1418 147v6h-6z" fill="#444"/><path d="M1418 183v6h-6z" fill="#444"/><path d="M1413.5 160v18M1428.5 161v8h8M1428.5 197v8h8" stroke="#888" stroke-dasharray="1 1" fill="none"/><rect x="1423" y="142" width="8" height="10" fill="#e8f0fc" stroke="#5a8ad0"/><rect x="1426" y="145" width="8" height="10" fill="#e8f0fc" stroke="#5a8ad0"/><rect x="1429" y="148" width="8" height="10" fill="#fff" stroke="#5a8ad0"/><path d="M1431 152h4M1431 154h4" stroke="#789"/><rect x="1438" y="161" width="10" height="13" fill="#fffce8" stroke="#333"/><path d="M1440 164h6M1440 167h6M1440 170h6" stroke="#1a9a4a"/><path d="M1440 167h5" stroke="#d22"/><path d="M1422 183l7-4 7 4v7l-7 4-7-4z" fill="#80dd60" stroke="#2a8a2a"/><path d="M1429 187v7M1422 183l7 4 7-4M1425.5 181v9M1432.5 181v9" stroke="#2a8a2a" fill="none" stroke-width=".8"/><path d="M1437 201l7-4 7 4v7l-7 4-7-4z" fill="#80dd60" stroke="#2a8a2a"/><path d="M1444 205v7M1437 201l7 4 7-4M1440.5 199v9M1447.5 199v9" stroke="#2a8a2a" fill="none" stroke-width=".8"/></svg>
<div class="t" style="left:1442px;top:143px;line-height:14px">Files</div>
<div class="t" style="left:1457px;top:161px;line-height:14px">consoleplay.pas</div>
<div class="t" style="left:1442px;top:179px;line-height:14px">Required Packages</div>
<div class="t" style="left:1457px;top:197px;line-height:14px">pl_uos</div>
<!-- EXPLORER -->
<div class="a" style="left:1390px;top:473px;width:540px;height:600px;border-radius:7px 0 0 0;border:1px solid #0b1220;background:linear-gradient(180deg,#6a84ae 0,#6d86b0 30px,#6580ab 60px,#5070a0 150px,#3d5a90 330px,#3a5588 100%);box-shadow:inset 0 0 0 1px rgba(200,215,240,.45)"></div>
<div class="a" style="left:1391px;top:474px;width:529px;height:60px;background:linear-gradient(90deg,rgba(255,255,255,.0),rgba(255,255,255,.12) 20%,rgba(0,0,30,.1) 50%,rgba(255,255,255,.06) 80%)"></div>
<div class="cb" style="left:1865px;top:473px;width:80px;height:18px"><b style="left:29px"></b><b style="left:56px"></b></div>
<div class="gl" style="left:1875px;top:483px;width:10px;height:3px"></div>
<div class="a" style="left:1902px;top:478px;width:10px;height:8px;border:2px solid #fff;border-top-width:3px;box-shadow:0 0 1px #000"></div>
<div class="a" style="left:1398px;top:504px;width:58px;height:28px;border-radius:14px;background:rgba(20,40,80,.12)"></div>
<div class="a" style="left:1400px;top:506px;width:24px;height:24px;border-radius:12px;border:1px solid #0a2a6a;background:radial-gradient(circle at 50% 30%,#bfe0ff 0,#4a90e0 35%,#1a4fb8 70%,#2a6ad0 100%)"></div>
<div class="a" style="left:1428px;top:506px;width:24px;height:24px;border-radius:12px;border:1px solid #0a2a6a;background:radial-gradient(circle at 50% 30%,#bfe0ff 0,#4a90e0 35%,#1a4fb8 70%,#2a6ad0 100%)"></div>
<svg style="left:1404px;top:512px" width="16" height="12"><path d="M7 1L2 6l5 5M2 6h12" stroke="#fff" stroke-width="3" fill="none"/></svg>
<svg style="left:1432px;top:512px" width="16" height="12"><path d="M9 1l5 5-5 5M14 6H2" stroke="#fff" stroke-width="3" fill="none"/></svg>
<svg style="left:1457px;top:516px" width="8" height="5"><path d="M0 0h7l-3.5 4z" fill="#9ad0f8"/></svg>
<div class="a" style="left:1468px;top:507px;width:390px;height:22px;border:1px solid #4a5a78;background:linear-gradient(180deg,#e4e8f0,#d8dde8);box-shadow:inset 0 1px 0 #fff"></div>
<div class="a" style="left:1832px;top:508px;width:1px;height:20px;background:#8a96ac"></div>
<svg style="left:1472px;top:510px" width="14" height="16"><path d="M1 2h4l1 1h6v12H1z" fill="#f4d870" stroke="#c8a040" stroke-width=".8"/><rect x="3" y="3" width="5" height="12" fill="#fbe89a"/></svg>
<div class="t" style="left:1491px;top:511px;line-height:14px;color:#222">&laquo;</div>
<div class="t" style="left:1508px;top:511px;line-height:14px;color:#222">CodeOcean</div>
<svg style="left:1580px;top:514px" width="5" height="8"><path d="M0 0v7l4-3.5z" fill="#000"/></svg>
<div class="t" style="left:1593px;top:511px;line-height:14px;color:#222">UOS</div>
<svg style="left:1626px;top:514px" width="5" height="8"><path d="M0 0v7l4-3.5z" fill="#000"/></svg>
<div class="t" style="left:1639px;top:511px;line-height:14px;color:#222">samples</div>
<svg style="left:1691px;top:514px" width="5" height="8"><path d="M0 0v7l4-3.5z" fill="#000"/></svg>
<svg style="left:1818px;top:516px" width="8" height="5"><path d="M0 0h7l-3.5 4z" fill="#1a3a8a"/></svg>
<svg style="left:1838px;top:510px" width="14" height="15"><path d="M2 7q1-5 7-4l-1-2M12 8q-1 5-7 4l1 2" stroke="#3a78d8" stroke-width="1.8" fill="none"/></svg>
<div class="a" style="left:1863px;top:507px;width:70px;height:22px;border:1px solid #4a5a78;background:linear-gradient(180deg,#e4e8f0,#d8dde8)"></div>
<div class="t" style="left:1872px;top:511px;line-height:14px;color:#6d6d6d;font-style:italic">Search sa</div>
<div class="a" style="left:1396px;top:536px;width:530px;height:520px;background:#fbfbfb;border-top:1px solid #1f2a3d;border-left:1px solid #1f2a3d"></div>
<div class="a" style="left:1397px;top:537px;width:523px;height:20px;background:linear-gradient(180deg,#f7f8fb,#e8ecf4 50%,#dde3ef);border-bottom:1px solid #c8d0de"></div>
<div class="t" style="left:1407px;top:541px;line-height:14px">File</div>
<div class="t" style="left:1441px;top:541px;line-height:14px">Edit</div>
<div class="t" style="left:1477px;top:541px;line-height:14px">View</div>
<div class="t" style="left:1519px;top:541px;line-height:14px">Tools</div>
<div class="t" style="left:1563px;top:541px;line-height:14px">Help</div>
<div class="a" style="left:1397px;top:558px;width:523px;height:30px;background:linear-gradient(180deg,#f8fbfe 0,#edf2fa 45%,#dfe8f4 55%,#dbe5f2 100%);border-bottom:1px solid #a0afc3"></div>
<div class="t" style="left:1416px;top:566px;line-height:14px;color:#1e395b">Organize</div>
<div class="t" style="left:1526px;top:566px;line-height:14px;color:#1e395b">Open</div>
<div class="t" style="left:1585px;top:566px;line-height:14px;color:#1e395b">Include in library</div>
<div class="t" style="left:1717px;top:566px;line-height:14px;color:#1e395b">Share with</div>
<svg style="left:1468px;top:571px" width="8" height="5"><path d="M0 0h7l-3.5 4z" fill="#1e395b"/></svg>
<svg style="left:1679px;top:571px" width="8" height="5"><path d="M0 0h7l-3.5 4z" fill="#1e395b"/></svg>
<svg style="left:1779px;top:571px" width="8" height="5"><path d="M0 0h7l-3.5 4z" fill="#1e395b"/></svg>
<svg style="left:1871px;top:571px" width="8" height="5"><path d="M0 0h7l-3.5 4z" fill="#1e395b"/></svg>
<div class="t" style="left:1808px;top:565px;line-height:14px;color:#1e395b;font-weight:bold">&raquo;</div>
<svg style="left:1505px;top:565px" width="17" height="16"><path d="M1 3h6l1 2h8v10H1z" fill="#f2d060" stroke="#c09a30" stroke-width=".8"/><path d="M3 9h11v6H3z" fill="#4ab0e8"/><path d="M6 15v-4h5v4" fill="#fff"/></svg>
<svg style="left:1845px;top:566px" width="16" height="14"><path d="M1 2h3M1 6h3M1 10h3M6 2h9M6 6h9M6 10h9" stroke="#556" stroke-width="1.4" stroke-dasharray="1.5 .5"/></svg>
<svg style="left:1899px;top:565px" width="16" height="16"><rect x="1" y="1" width="14" height="13" fill="#fff" stroke="#556"/><rect x="9" y="2" width="5" height="11" fill="#4ab0e8"/></svg>
<svg style="left:1534px;top:589px" width="8" height="4"><path d="M0 3.5h7L3.5 0z" fill="#8aa8c8"/></svg>
<div class="a" style="left:1668px;top:592px;width:1px;height:20px;background:#e4e8ee"></div>
<div class="a" style="left:1788px;top:592px;width:1px;height:20px;background:#e4e8ee"></div>
<div class="a" style="left:1908px;top:592px;width:1px;height:20px;background:#e4e8ee"></div>
<div class="t" style="left:1414px;top:595px;line-height:14px;color:#4c607a">Name</div>
<div class="t" style="left:1675px;top:595px;line-height:14px;color:#4c607a">Date modified</div>
<div class="t" style="left:1796px;top:595px;line-height:14px;color:#4c607a">Type</div>
<div class="t" style="left:1914px;top:595px;line-height:14px;color:#4c607a">S</div>
<div class="a" style="left:1411px;top:641px;width:520px;height:22px;border:1px solid #d9d9d9;border-radius:3px;background:linear-gradient(180deg,#fafafa,#ececec)"></div>
<svg style="left:1415px;top:623px" width="16" height="16"><path d="M1 2h5l1 1h7v12H1z" fill="#e8c860" stroke="#c8a040" stroke-width=".8"/><rect x="2" y="3" width="6" height="12" fill="#f8e498"/></svg>
<div class="t" style="left:1435px;top:624px;line-height:14px">ConsolePlay</div>
<div class="t" style="left:1675px;top:624px;line-height:14px;color:#6d6d6d">1/4/2015 10:07 μμ</div>
<div class="t" style="left:1796px;top:624px;line-height:14px;color:#6d6d6d">File folder</div>
<svg style="left:1415px;top:644px" width="16" height="16"><path d="M1 2h5l1 1h7v12H1z" fill="#e8c860" stroke="#c8a040" stroke-width=".8"/><rect x="2" y="3" width="6" height="12" fill="#f8e498"/></svg>
<div class="t" style="left:1435px;top:645px;line-height:14px">xbin</div>
<div class="t" style="left:1675px;top:645px;line-height:14px;color:#6d6d6d">1/4/2015 10:48 μμ</div>
<div class="t" style="left:1796px;top:645px;line-height:14px;color:#6d6d6d">File folder</div>
<svg style="left:1415px;top:665px" width="16" height="16"><path d="M1 2h5l1 1h7v12H1z" fill="#e8c860" stroke="#c8a040" stroke-width=".8"/><rect x="2" y="3" width="6" height="12" fill="#f8e498"/></svg>
<div class="t" style="left:1435px;top:666px;line-height:14px">xmedia</div>
<div class="t" style="left:1675px;top:666px;line-height:14px;color:#6d6d6d">1/4/2015 9:36 μμ</div>
<div class="t" style="left:1796px;top:666px;line-height:14px;color:#6d6d6d">File folder</div>
<div class="a" style="left:1417px;top:1043px;width:503px;height:11px;background:linear-gradient(180deg,#d8d8d8,#f0f0f0 20%,#e8e8e8);border-top:1px solid #9a9a9a"></div>
<div class="a" style="left:1664px;top:1048px;width:5px;height:6px;background:repeating-linear-gradient(90deg,#555 0 1px,transparent 1px 2px)"></div>
<!-- MESSAGES -->
<div class="win" style="left:364px;top:968px;width:1053px;height:100px;background:#44659a"></div>
<div class="a" style="left:382px;top:969px;width:90px;height:26px;border-radius:13px;background:radial-gradient(ellipse at center,rgba(200,220,245,.5),rgba(200,220,245,0) 70%)"></div>
<svg style="left:372px;top:974px" width="16" height="16"><ellipse cx="8" cy="3" rx="7.5" ry="2.6" fill="#3a88d8"/><ellipse cx="8" cy="3" rx="5.5" ry="1.4" fill="#9ad0f8"/><path d="M1.5 4.5q6.5 3 13 0l-1.5 2.5q-5 2.5-10 0z" fill="#2a70c0"/><path d="M3.5 8q4.5 2 9 0l-1.5 2.5q-3 1.8-6 0z" fill="#4a98e0"/><path d="M5.5 11.5q3 1.2 5 0l-1.2 2q-1.5 1-2.6 0z" fill="#3a80c8"/><path d="M7 14q1 .8 2 0l-.8 1.8z" fill="#2a70c0"/><rect x="7" y="11" width="8.5" height="4.5" fill="#7c7" stroke="#dd4" stroke-width=".8"/></svg>
<div class="cap" style="left:392px;top:975px;line-height:14px">Messages</div>
<div class="a" style="left:1392px;top:968px;width:25px;height:90px;border-radius:0 7px 0 0;border-top:1px solid rgba(90,90,90,.6);border-right:1px solid #808080;background:linear-gradient(90deg,rgba(240,246,252,0) 0,rgba(240,246,252,.85) 9px,#f4f8fc 14px,#fafcfe 100%)"></div>
<div class="a" style="left:1417px;top:972px;width:8px;height:90px;background:linear-gradient(90deg,rgba(0,0,0,.18),rgba(0,0,0,0))"></div>
<div class="cb" style="left:1308px;top:968px;width:103px;height:18px"><b style="left:28px"></b><b style="left:56px"></b></div>
<div class="gl" style="left:1318px;top:978px;width:10px;height:3px"></div>
<div class="a" style="left:1346px;top:972px;width:10px;height:8px;border:2px solid #fff;border-top-width:3px;box-shadow:0 0 1px #000"></div>
<svg style="left:1383px;top:972px" width="10" height="8"><path d="M1 0.5L9 7.5M9 0.5L1 7.5" stroke="#fff" stroke-width="2.6"/></svg>
<div class="a" style="left:370px;top:996px;width:1041px;height:70px;background:#fff;border:1px solid #1f2a3d;box-shadow:0 0 0 1px rgba(168,184,216,.9)"></div>
<div class="a" style="left:371px;top:997px;width:14px;height:60px;background:#ffffc0"></div>
<svg style="left:373px;top:1000px" width="10" height="10"><path d="M1 1L9 9M9 1L1 9" stroke="#000" stroke-width="2.4"/></svg>
<div class="a" style="left:385px;top:997px;width:1007px;height:17px;background:#66ff66;border-top:2px dashed #222"></div>
<div class="t" style="left:387px;top:999px;line-height:14px">Compile Project, Target: C:\codetyphon\CodeOcean\UOS\samples\xbin\consoleplay.exe: Success, Hints: 1</div>
<svg style="left:389px;top:1017px" width="10" height="10"><path d="M.5 .5h6l3 3v6h-9z" fill="#fff4c0" stroke="#d8c070"/></svg>
<div class="t" style="left:402px;top:1016px;line-height:14px">consoleplay.pas(43,10) Note: Local variable "opath" not used</div>
<div class="a" style="left:1392px;top:997px;width:17px;height:60px;background:#f0f0f0"></div>
<svg style="left:1399px;top:1003px" width="8" height="5"><path d="M0 4h7L3.5 0z" fill="#888"/></svg>
<!-- CONSOLE -->
<div class="a" style="left:262px;top:225px;width:676px;height:342px;border-radius:7px 7px 5px 5px;border:1px solid #1a1a1a;background:linear-gradient(180deg,#c8dcf2 0,#bcd4ee 18px,#b6cfec 100%);box-shadow:0 4px 14px rgba(0,0,0,.55),inset 0 0 0 1px rgba(255,255,255,.6)"></div>
<div class="a" style="left:470px;top:244px;width:460px;height:12px;background:linear-gradient(90deg,rgba(100,30,120,0),rgba(100,35,125,.5) 20%,rgba(110,45,135,.55) 60%,rgba(140,90,160,.45));filter:blur(2px)"></div>
<div class="a" style="left:290px;top:228px;width:360px;height:24px;border-radius:12px;background:radial-gradient(ellipse at center,rgba(255,255,255,.55),rgba(255,255,255,0) 70%)"></div>
<div class="a" style="left:345px;top:238px;width:80px;height:18px;background:rgba(50,60,80,.3);filter:blur(4px)"></div>
<svg style="left:273px;top:234px" width="15" height="13"><rect x=".5" y=".5" width="14" height="12" fill="#e8eef0" stroke="#aab"/><rect x="2" y="3" width="5" height="8" fill="#3a8a70"/><rect x="8" y="3" width="5" height="8" fill="#dde6e0"/></svg>
<div class="t" style="left:293px;top:233px;line-height:14px;text-shadow:0 0 6px #fff,0 0 9px #fff">C:\codetyphon\CodeOcean\UOS\samples\xbin\consoleplay.exe</div>
<div class="a" style="left:827px;top:225px;width:56px;height:20px;border:1px solid #3a3f50;border-top:none;border-radius:0 0 0 5px;background:linear-gradient(180deg,#eef3fa 0,#dfe7f2 45%,#a8b6cc 55%,#b8c4d8 100%);box-shadow:inset 0 0 0 1px rgba(255,255,255,.7)"></div>
<div class="a" style="left:855px;top:225px;width:1px;height:19px;background:#3a3f50"></div>
<div class="a" style="left:882px;top:225px;width:48px;height:20px;border:1px solid #3a1a18;border-top:none;border-radius:0 0 5px 0;background:linear-gradient(180deg,#eeb0a0 0,#e08a78 40%,#c8402a 55%,#d05a44 100%);box-shadow:inset 0 0 0 1px rgba(255,210,200,.6)"></div>
<div class="a" style="left:836px;top:235px;width:12px;height:5px;background:#fff;border:1px solid #333a4a"></div>
<div class="a" style="left:863px;top:230px;width:12px;height:10px;border:2px solid #fff;box-shadow:0 0 0 1px #333a4a,inset 0 0 0 1px #333a4a;background:transparent"></div>
<svg style="left:900px;top:230px" width="13" height="11"><path d="M2 1.5L11 9.5M11 1.5L2 9.5" stroke="#2a2a3a" stroke-width="4"/><path d="M2 1.5L11 9.5M11 1.5L2 9.5" stroke="#fff" stroke-width="2.4"/></svg>
<div class="a" style="left:340px;top:557px;width:597px;height:9px;border-bottom:1px solid #d8e0ec;border-radius:0 0 5px 0;background:linear-gradient(90deg,rgba(12,18,26,0) 0,#10161e 40px,#0c1218 100%)"></div>
<div class="a" style="left:929px;top:250px;width:8px;height:316px;border-right:1px solid #d8e0ec;border-radius:0 0 5px 0;background:linear-gradient(180deg,rgba(12,18,26,0) 0,#0c1218 12px,#0c1218 100%)"></div>
<div class="a" style="left:271px;top:557px;width:659px;height:1px;background:#e8eef6"></div>
<div class="a" style="left:929px;top:256px;width:1px;height:302px;background:#e8eef6"></div>
<div class="a" style="left:271px;top:256px;width:641px;height:302px;background:#000;overflow:hidden"><div class="t mono" style="left:1px;top:14px;line-height:12px;font-size:13.333px;font-weight:bold;color:#c0c0c0">PA_FileName = C:\codetyphon\CodeOcean\0_libraries\x86_64-Win64\LibPortaudio-64.d</div><div class="t mono" style="left:1px;top:26px;line-height:12px;font-size:13.333px;font-weight:bold;color:#c0c0c0">ll</div><div class="t mono" style="left:1px;top:38px;line-height:12px;font-size:13.333px;font-weight:bold;color:#c0c0c0">PA_FileName = C:\codetyphon\CodeOcean\0_libraries\x86_64-Win64\LibSndFile-64.dll</div><div class="t mono" style="left:1px;top:62px;line-height:12px;font-size:13.333px;font-weight:bold;color:#c0c0c0">Result of loading (if 0 =&gt; ok ) : 0</div><div class="t mono" style="left:1px;top:74px;line-height:12px;font-size:13.333px;font-weight:bold;color:#c0c0c0">Press a key to exit...</div><div class="a" style="left:1px;top:95px;width:8px;height:3px;background:#c0c0c0"></div></div>
<div class="a" style="left:912px;top:256px;width:17px;height:302px;background:linear-gradient(90deg,#e8e8e8,#f4f4f4)"></div>
<svg style="left:917px;top:264px" width="8" height="5"><path d="M0 4h7L3.5 0z" fill="#333"/></svg>
<svg style="left:917px;top:546px" width="8" height="5"><path d="M0 0h7l-3.5 4z" fill="#333"/></svg>
<div class="a" style="left:913px;top:275px;width:15px;height:21px;border:1px solid #989898;border-radius:2px;background:linear-gradient(90deg,#f4f4f4,#e6e6e6 50%,#d4d4d4)"></div>
<div class="a" style="left:917px;top:282px;width:7px;height:5px;background:repeating-linear-gradient(180deg,#555 0 1px,transparent 1px 2px)"></div>
</body></html>
